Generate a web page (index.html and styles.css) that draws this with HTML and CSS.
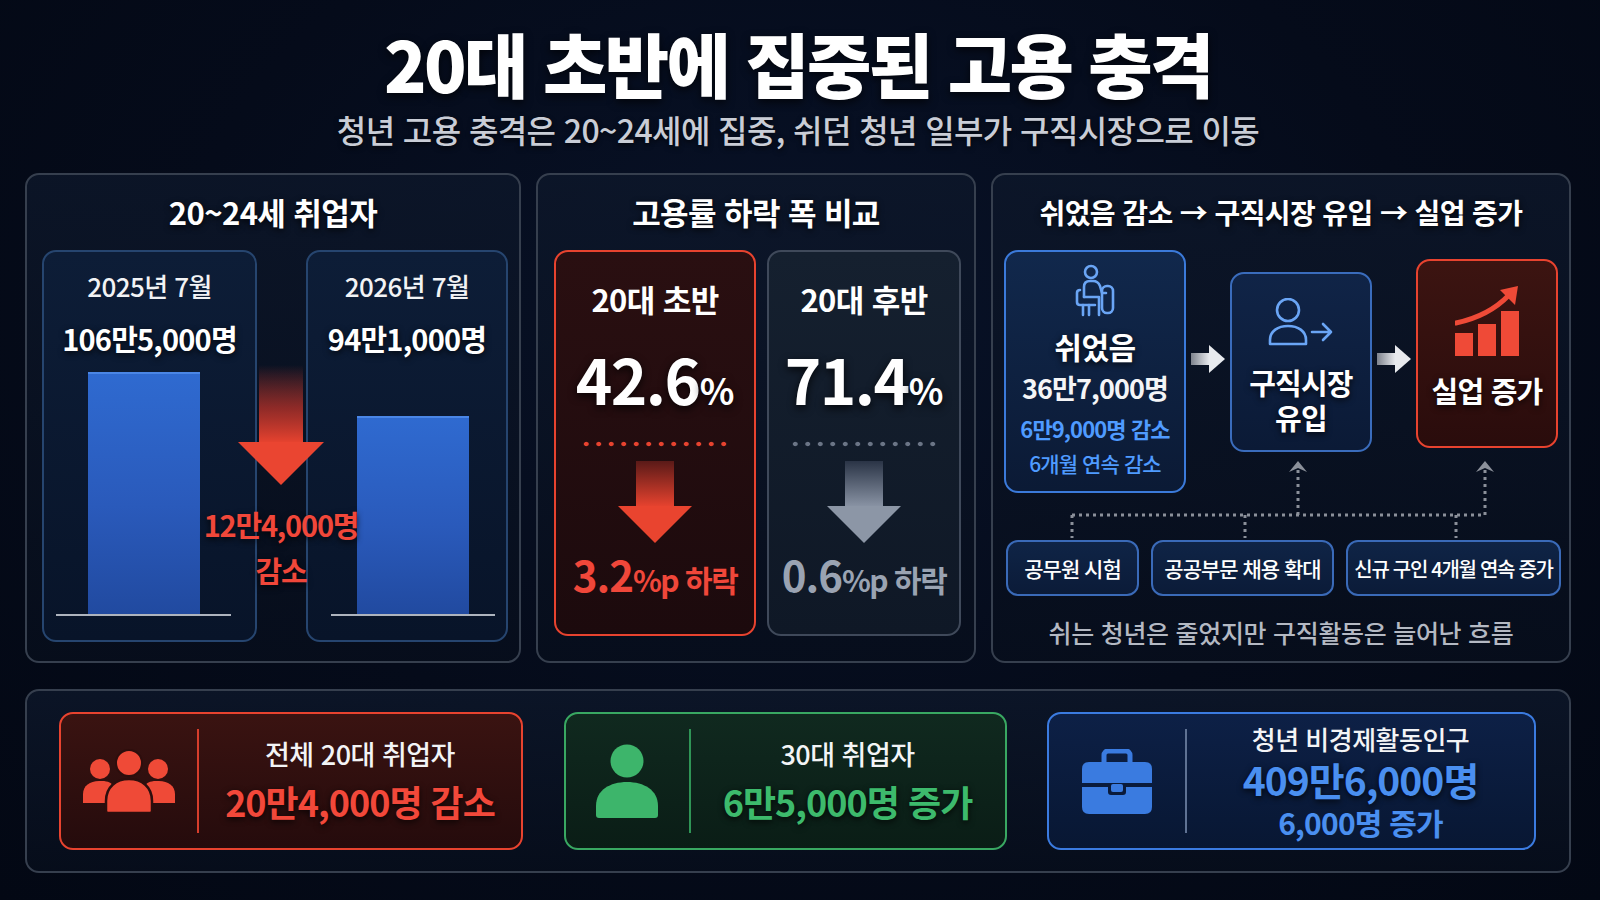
FILE: index.html
```html
<!DOCTYPE html>
<html lang="ko">
<head>
<meta charset="utf-8">
<title>20대 초반에 집중된 고용 충격</title>
<link rel="stylesheet" href="styles.css">
</head>
<body>
<div class="page">
  <header class="hero">
    <h1>20대 초반에 집중된 고용 충격</h1>
    <p class="sub">청년 고용 충격은 20~24세에 집중, 쉬던 청년 일부가 구직시장으로 이동</p>
  </header>

  <section class="top">
    <div class="panel">
      <h2 class="ptitle">20~24세 취업자</h2>
      <div class="bars">
        <div class="bcard bcard-l">
          <div class="blabel">2025년 7월</div>
          <div class="bvalue">106만5,000명</div>
          <div class="chart"><div class="bar" style="height:242px"></div></div>
        </div>
        <div class="bcard bcard-r">
          <div class="blabel">2026년 7월</div>
          <div class="bvalue">94만1,000명</div>
          <div class="chart"><div class="bar" style="height:198px"></div></div>
        </div>
      </div>
      <div class="drop">
        <svg class="drop-arrow" viewBox="0 0 86 120">
          <defs>
            <linearGradient id="dropg" x1="0" y1="0" x2="0" y2="1">
              <stop offset="0" stop-color="#e8432f" stop-opacity="0"/>
              <stop offset="0.55" stop-color="#c8352a" stop-opacity="0.7"/>
              <stop offset="1" stop-color="#e8432f"/>
            </linearGradient>
          </defs>
          <rect x="21" y="0" width="44" height="78" fill="url(#dropg)"/>
          <polygon points="0,77 86,77 43,120" fill="#ea4531"/>
        </svg>
        <div class="drop-t first">12만4,000명</div>
        <div class="drop-t">감소</div>
      </div>
    </div>

    <div class="panel">
      <h2 class="ptitle">고용률 하락 폭 비교</h2>
      <div class="rates">
        <div class="rcard rcard-red">
          <div class="rname">20대 초반</div>
          <div class="rval">42.6<small>%</small></div>
          <div class="dots"></div>
          <svg class="rarrow" viewBox="0 0 74 82">
            <defs>
              <linearGradient id="rg1" x1="0" y1="0" x2="0" y2="1">
                <stop offset="0" stop-color="#5a1a18"/>
                <stop offset="1" stop-color="#e8432f"/>
              </linearGradient>
            </defs>
            <rect x="18" y="0" width="38" height="46" fill="url(#rg1)"/>
            <polygon points="0,45 74,45 37,82" fill="#e9442f"/>
          </svg>
          <div class="rdrop"><b>3.2</b><span>%p 하락</span></div>
        </div>
        <div class="rcard rcard-gray">
          <div class="rname">20대 후반</div>
          <div class="rval">71.4<small>%</small></div>
          <div class="dots"></div>
          <svg class="rarrow" viewBox="0 0 74 82">
            <defs>
              <linearGradient id="rg2" x1="0" y1="0" x2="0" y2="1">
                <stop offset="0" stop-color="#2a3446"/>
                <stop offset="1" stop-color="#8a94a5"/>
              </linearGradient>
            </defs>
            <rect x="18" y="0" width="38" height="46" fill="url(#rg2)"/>
            <polygon points="0,45 74,45 37,82" fill="#8c96a6"/>
          </svg>
          <div class="rdrop"><b>0.6</b><span>%p 하락</span></div>
        </div>
      </div>
    </div>

    <div class="panel">
      <h2 class="ptitle ptitle-s">쉬었음 감소 → 구직시장 유입 → 실업 증가</h2>
      <div class="flow">
        <div class="fcard fcard-rest">
          <svg class="ic-sit" viewBox="0 0 42 54" fill="none" stroke="#6aa5f5" stroke-width="2.6" stroke-linecap="round" stroke-linejoin="round">
            <circle cx="17" cy="8" r="6"/>
            <path d="M10 33 V23 Q10 17 16 17 H19 Q24 17 26 22 L28 29 H32"/>
            <rect x="28" y="22" width="11" height="27" rx="5"/>
            <path d="M10 33 H25 V51"/>
            <path d="M6 26 Q3 26 3 29 V38 Q3 41 6 41 H21"/>
            <path d="M9 41 V51 M15 41 V51"/>
          </svg>
          <div class="f-name">쉬었음</div>
          <div class="f-num">36만7,000명</div>
          <div class="f-blue">6만9,000명 감소</div>
          <div class="f-blue f-blue2">6개월 연속 감소</div>
        </div>
        <svg class="farrow" viewBox="0 0 34 28">
          <defs>
            <linearGradient id="fa" x1="0" y1="0" x2="1" y2="0">
              <stop offset="0" stop-color="#7d828c"/>
              <stop offset="1" stop-color="#eceef2"/>
            </linearGradient>
          </defs>
          <rect x="0" y="8" width="19" height="12" fill="url(#fa)"/>
          <polygon points="18,0 34,14 18,28" fill="#e8eaee"/>
        </svg>
        <div class="fcard fcard-job">
          <svg class="ic-job" viewBox="0 0 66 48" fill="none" stroke="#6aa5f5" stroke-width="2.6" stroke-linecap="round" stroke-linejoin="round">
            <circle cx="20" cy="12" r="11"/>
            <path d="M2 46 V42 C2 33 10 28 20 28 C30 28 38 33 38 42 V46 Z"/>
            <path d="M44 34 H63 M55 26 L63 34 L55 42"/>
          </svg>
          <div class="f-big">구직시장</div>
          <div class="f-big f-big2">유입</div>
        </div>
        <svg class="farrow" viewBox="0 0 34 28">
          <rect x="0" y="8" width="19" height="12" fill="url(#fa)"/>
          <polygon points="18,0 34,14 18,28" fill="#e8eaee"/>
        </svg>
        <div class="fcard fcard-unemp">
          <svg class="ic-chart" viewBox="0 0 64 70" fill="#ef4a37">
            <rect x="0" y="47" width="18" height="23"/>
            <rect x="23" y="38" width="18" height="32"/>
            <rect x="46" y="25" width="18" height="45"/>
            <path d="M1 37 Q34 30 54 9" fill="none" stroke="#ef4a37" stroke-width="5" stroke-linecap="round"/>
            <polygon points="63,0 45,4 60,19"/>
          </svg>
          <div class="f-big">실업 증가</div>
        </div>
      </div>
      <svg class="links" viewBox="0 0 575 82">
        <g fill="none" stroke="#8b909a" stroke-width="3" stroke-dasharray="3 4">
          <path d="M79 57 H492"/>
          <path d="M305 57 V12"/>
          <path d="M492 57 V12"/>
          <path d="M79 57 V80"/>
          <path d="M252 57 V80"/>
          <path d="M463 57 V80"/>
        </g>
        <g fill="#8b909a">
          <polygon points="296,14 305,3 314,14 305,10"/>
          <polygon points="483,14 492,3 501,14 492,10"/>
        </g>
      </svg>
      <div class="pills">
        <div class="pill pill-1">공무원 시험</div>
        <div class="pill pill-2">공공부문 채용 확대</div>
        <div class="pill pill-3">신규 구인 4개월 연속 증가</div>
      </div>
      <p class="fnote">쉬는 청년은 줄었지만 구직활동은 늘어난 흐름</p>
    </div>
  </section>

  <section class="panel summary">
    <div class="scard scard-red">
      <div class="sico">
        <svg class="ic-group" viewBox="0 0 92 64" fill="#ef4a37">
          <circle cx="17" cy="20" r="10"/>
          <circle cx="75" cy="20" r="10"/>
          <path d="M0 54 V45 C0 37 7 32 16 32 H19 C25 32 29 34 31 38 V54 Z"/>
          <path d="M92 54 V45 C92 37 85 32 76 32 H73 C67 32 63 34 61 38 V54 Z"/>
          <circle cx="46" cy="14" r="13" stroke="#2d0e0d" stroke-width="2"/>
          <path d="M23 62 V52 C23 38 33 30 46 30 C59 30 69 38 69 52 V62 Q69 64 67 64 H25 Q23 64 23 62 Z" stroke="#2d0e0d" stroke-width="2.5"/>
        </svg>
      </div>
      <div class="sdiv"></div>
      <div class="stxt">
        <div class="st-title">전체 20대 취업자</div>
        <div class="st-val">20만4,000명 감소</div>
      </div>
    </div>
    <div class="scard scard-green">
      <div class="sico">
        <svg class="ic-person" viewBox="0 0 62 74" fill="#3db56b">
          <circle cx="31" cy="17" r="16.5"/>
          <path d="M0 71 V62 C0 46 14 38 31 38 C48 38 62 46 62 62 V71 Q62 74 59 74 H3 Q0 74 0 71 Z"/>
        </svg>
      </div>
      <div class="sdiv"></div>
      <div class="stxt">
        <div class="st-title">30대 취업자</div>
        <div class="st-val">6만5,000명 증가</div>
      </div>
    </div>
    <div class="scard scard-blue">
      <div class="sico">
        <svg class="ic-brief" viewBox="0 0 70 65" fill="#3a7be0">
          <rect x="22" y="2" width="26" height="15" rx="4" fill="none" stroke="#3a7be0" stroke-width="5"/>
          <path d="M0 20 Q0 13 7 13 H63 Q70 13 70 20 V34 H0 Z"/>
          <path d="M0 38 H26 V43 Q26 46 29 46 H41 Q44 46 44 43 V38 H70 V58 Q70 65 63 65 H7 Q0 65 0 58 Z"/>
          <rect x="29" y="35" width="12" height="8" rx="2"/>
        </svg>
      </div>
      <div class="sdiv"></div>
      <div class="stxt stxt-3">
        <div class="st-title">청년 비경제활동인구</div>
        <div class="st-val st-big">409만6,000명</div>
        <div class="st-sub">6,000명 증가</div>
      </div>
    </div>
  </section>
</div>
</body>
</html>
```

FILE: styles.css
```css
* {
  box-sizing: border-box;
  margin: 0;
  padding: 0;
}

html, body {
  width: 1600px;
  height: 900px;
}

body {
  background: radial-gradient(ellipse at 50% 35%, #081228 0%, #050b1a 55%, #030814 100%);
  font-family: "Noto Sans CJK KR", "Noto Sans", sans-serif;
  color: #ffffff;
  overflow: hidden;
}

.page {
  padding: 0 29px 0 25px;
}

/* header */
.hero {
  text-align: center;
  padding-top: 20px;
}

.hero h1 {
  font-size: 70px;
  line-height: 86px;
  font-weight: 900;
  letter-spacing: -2.6px;
  color: #ffffff;
  text-shadow: 0 3px 8px rgba(0, 0, 0, 0.7);
}

.hero .sub {
  margin-top: 2px;
  font-size: 32px;
  line-height: 42px;
  font-weight: 500;
  letter-spacing: -0.6px;
  color: #c9cdd6;
  text-shadow: 0 2px 5px rgba(0, 0, 0, 0.7);
}

/* panels */
.top {
  display: grid;
  grid-template-columns: 496px 440px 1fr;
  column-gap: 15px;
  margin-top: 23px;
  height: 490px;
}

.panel {
  position: relative;
  border: 2px solid #363f4e;
  border-radius: 14px;
  background: linear-gradient(180deg, rgba(13, 23, 42, 0.8), rgba(7, 14, 28, 0.8));
}

.ptitle {
  text-align: center;
  font-size: 31px;
  line-height: 36px;
  font-weight: 700;
  letter-spacing: -0.6px;
  padding-top: 19px;
  margin-bottom: 20px;
  color: #ffffff;
  text-shadow: 0 2px 6px rgba(0, 0, 0, 0.8);
}

.ptitle-s {
  font-size: 28px;
}

/* panel 1 : bars */
.bars {
  display: grid;
  grid-template-columns: 215px 202px;
  justify-content: space-between;
  padding: 0 11px 0 15px;
}

.bcard {
  height: 392px;
  display: flex;
  flex-direction: column;
  align-items: center;
  padding-top: 20px;
  border: 2px solid #26456f;
  border-radius: 14px;
  background: linear-gradient(180deg, #0d1d37 0%, #081429 100%);
}

.blabel {
  font-size: 26px;
  line-height: 28px;
  font-weight: 500;
  letter-spacing: -0.6px;
  color: #f2f3f5;
}

.bvalue {
  margin-top: 20px;
  font-size: 29px;
  line-height: 36px;
  font-weight: 700;
  letter-spacing: -0.8px;
  color: #ffffff;
  text-shadow: 0 2px 6px rgba(0, 0, 0, 0.8);
}

.chart {
  align-self: stretch;
  flex: 1;
  display: flex;
  align-items: flex-end;
  justify-content: center;
  border-bottom: 2px solid #aeb4be;
  margin-bottom: 24px;
}

.bcard-l .chart {
  margin-left: 12px;
  margin-right: 24px;
}

.bcard-r .chart {
  margin-left: 23px;
  margin-right: 11px;
}

.bar {
  width: 112px;
  background: linear-gradient(180deg, #2f6ad0 0%, #2a5abb 55%, #214aa0 100%);
  border-top: 2px solid #4a86e6;
}

.drop {
  position: absolute;
  left: 174px;
  top: 190px;
  width: 160px;
  display: flex;
  flex-direction: column;
  align-items: center;
}

.drop-arrow {
  width: 86px;
  height: 120px;
  display: block;
}

.drop-t {
  font-size: 29px;
  line-height: 46px;
  font-weight: 700;
  letter-spacing: -1.2px;
  color: #f0473a;
  text-shadow: 0 2px 6px rgba(0, 0, 0, 0.8);
  white-space: nowrap;
}

.drop-t.first {
  margin-top: 16px;
}

/* panel 2 : rates */
.rates {
  display: grid;
  grid-template-columns: 202px 194px;
  column-gap: 11px;
  padding: 0 13px 0 16px;
  margin-top: 5px;
}

.rcard {
  height: 386px;
  display: flex;
  flex-direction: column;
  align-items: center;
  padding-top: 28px;
  border: 2px solid;
  border-radius: 14px;
}

.rcard-red {
  border-color: #e8432f;
  background: linear-gradient(180deg, #2a0f11 0%, #1c0a0d 100%);
}

.rcard-gray {
  border-color: #3f495a;
  background: linear-gradient(180deg, #15202f 0%, #0f1826 100%);
}

.rname {
  font-size: 31px;
  line-height: 38px;
  font-weight: 700;
  letter-spacing: -0.6px;
  color: #ffffff;
}

.rval {
  margin-top: 25px;
  font-size: 62px;
  line-height: 70px;
  font-weight: 700;
  letter-spacing: -1.5px;
  color: #ffffff;
  text-shadow: 0 3px 8px rgba(0, 0, 0, 0.8);
}

.rval small {
  font-size: 36px;
  letter-spacing: 0;
}

.dots {
  margin-top: 17px;
  width: 150px;
  height: 6px;
  background-image: radial-gradient(circle, #e8432f 2px, transparent 2.6px);
  background-size: 12.5px 6px;
}

.rcard-gray .dots {
  background-image: radial-gradient(circle, #6b7586 2px, transparent 2.6px);
}

.rarrow {
  display: block;
  margin-top: 14px;
  width: 74px;
  height: 82px;
}

.rdrop {
  margin-top: 6px;
  line-height: 50px;
  white-space: nowrap;
  color: #f0473a;
}

.rcard-gray .rdrop {
  color: #9aa3b2;
}

.rdrop b {
  font-size: 42px;
  font-weight: 700;
  letter-spacing: -1px;
}

.rdrop span {
  font-size: 30px;
  font-weight: 700;
  letter-spacing: -1.5px;
}

/* panel 3 : flow */
.flow {
  display: flex;
  justify-content: space-between;
  align-items: flex-start;
  padding: 0 11px;
  height: 243px;
}

.fcard {
  display: flex;
  flex-direction: column;
  align-items: center;
  border: 2px solid;
  border-radius: 14px;
  text-align: center;
}

.fcard-rest {
  width: 182px;
  height: 243px;
  padding-top: 12px;
  border-color: #3b7ada;
  background: linear-gradient(180deg, #11284c 0%, #0b1a35 100%);
}

.fcard-job {
  width: 142px;
  height: 180px;
  margin-top: 22px;
  padding-top: 24px;
  border-color: #3a6cbc;
  background: linear-gradient(180deg, #102447 0%, #0b1a36 100%);
}

.fcard-unemp {
  width: 142px;
  height: 189px;
  margin-top: 9px;
  padding-top: 25px;
  border-color: #e8432f;
  background: linear-gradient(180deg, #3c1411 0%, #2a0c0c 100%);
}

.farrow {
  width: 34px;
  height: 28px;
  margin-top: 95px;
  flex: none;
}

.ic-sit {
  width: 42px;
  height: 54px;
  display: block;
}

.ic-job {
  width: 66px;
  height: 48px;
  display: block;
}

.ic-chart {
  width: 64px;
  height: 70px;
  display: block;
}

.f-name {
  margin-top: 10px;
  font-size: 30px;
  line-height: 36px;
  font-weight: 700;
  letter-spacing: -0.5px;
  text-shadow: 0 2px 6px rgba(0, 0, 0, 0.8);
}

.f-num {
  font-size: 27px;
  line-height: 48px;
  font-weight: 700;
  letter-spacing: -0.9px;
  color: #f4f5f7;
}

.f-blue {
  font-size: 22px;
  line-height: 32px;
  font-weight: 700;
  letter-spacing: -0.9px;
  color: #4f9bff;
}

.f-blue2 {
  font-size: 21px;
  line-height: 38px;
  font-weight: 500;
}

.f-big {
  margin-top: 20px;
  font-size: 29px;
  line-height: 33px;
  font-weight: 700;
  letter-spacing: -0.8px;
  color: #ffffff;
  text-shadow: 0 2px 6px rgba(0, 0, 0, 0.8);
}

.f-big2 {
  margin-top: 2px;
}

.fcard-unemp .f-big {
  margin-top: 18px;
}

.links {
  display: block;
  width: 575px;
  height: 82px;
  margin-top: -35px;
}

.pills {
  display: flex;
  gap: 12px;
  padding: 0 7px 0 13px;
}

.pill {
  height: 56px;
  display: flex;
  align-items: center;
  justify-content: center;
  border: 2px solid #3a6ab8;
  border-radius: 12px;
  background: linear-gradient(180deg, #0f2446 0%, #0b1b38 100%);
  font-size: 21px;
  font-weight: 500;
  letter-spacing: -1px;
  color: #ffffff;
  white-space: nowrap;
}

.pill-1 { width: 133px; }
.pill-2 { width: 183px; }
.pill-3 { width: 215px; font-size: 20px; letter-spacing: -1.3px; }

.fnote {
  margin-top: 19px;
  text-align: center;
  font-size: 25px;
  line-height: 34px;
  font-weight: 500;
  letter-spacing: -0.3px;
  color: #b4b9c3;
}

/* summary */
.summary {
  margin-top: 26px;
  height: 184px;
  display: grid;
  grid-template-columns: 464px 443px 489px;
  justify-content: space-between;
  padding: 21px 33px 21px 32px;
}

.scard {
  display: flex;
  align-items: center;
  border: 2px solid;
  border-radius: 14px;
}

.scard-red {
  border-color: #e8432f;
  background: linear-gradient(180deg, #3a1311 0%, #250b0c 100%);
}

.scard-green {
  border-color: #39a862;
  background: linear-gradient(180deg, #10291f 0%, #0a1d16 100%);
}

.scard-blue {
  border-color: #3b7be0;
  background: linear-gradient(180deg, #0d2046 0%, #081733 100%);
}

.sico {
  width: 136px;
  display: flex;
  justify-content: center;
  align-items: center;
  flex: none;
}

.scard-green .sico {
  width: 123px;
}

.sdiv {
  width: 2px;
  height: 104px;
  flex: none;
}

.scard-red .sdiv { background: #d63e2c; }
.scard-green .sdiv { background: #2f9556; }
.scard-blue .sdiv { background: #5f7293; }

.ic-group { width: 92px; height: 64px; }
.ic-person { width: 62px; height: 74px; }
.ic-brief { width: 70px; height: 65px; }

.stxt {
  flex: 1;
  text-align: center;
}

.st-title {
  font-size: 27px;
  line-height: 32px;
  font-weight: 500;
  letter-spacing: -0.5px;
  color: #f3f4f6;
}

.st-val {
  margin-top: 8px;
  font-size: 36px;
  line-height: 46px;
  font-weight: 700;
  letter-spacing: -1px;
  text-shadow: 0 2px 6px rgba(0, 0, 0, 0.8);
}

.scard-red .st-val { color: #f2483a; }
.scard-green .st-val { color: #3dba6c; }

.stxt-3 {
  padding-top: 2px;
}

.stxt-3 .st-title {
  font-size: 26px;
  line-height: 32px;
}

.st-big {
  margin-top: 0;
  font-size: 39px;
  line-height: 48px;
  color: #4a8ff0;
}

.st-sub {
  font-size: 30px;
  line-height: 38px;
  font-weight: 700;
  letter-spacing: -0.8px;
  color: #4a8ff0;
}
```
